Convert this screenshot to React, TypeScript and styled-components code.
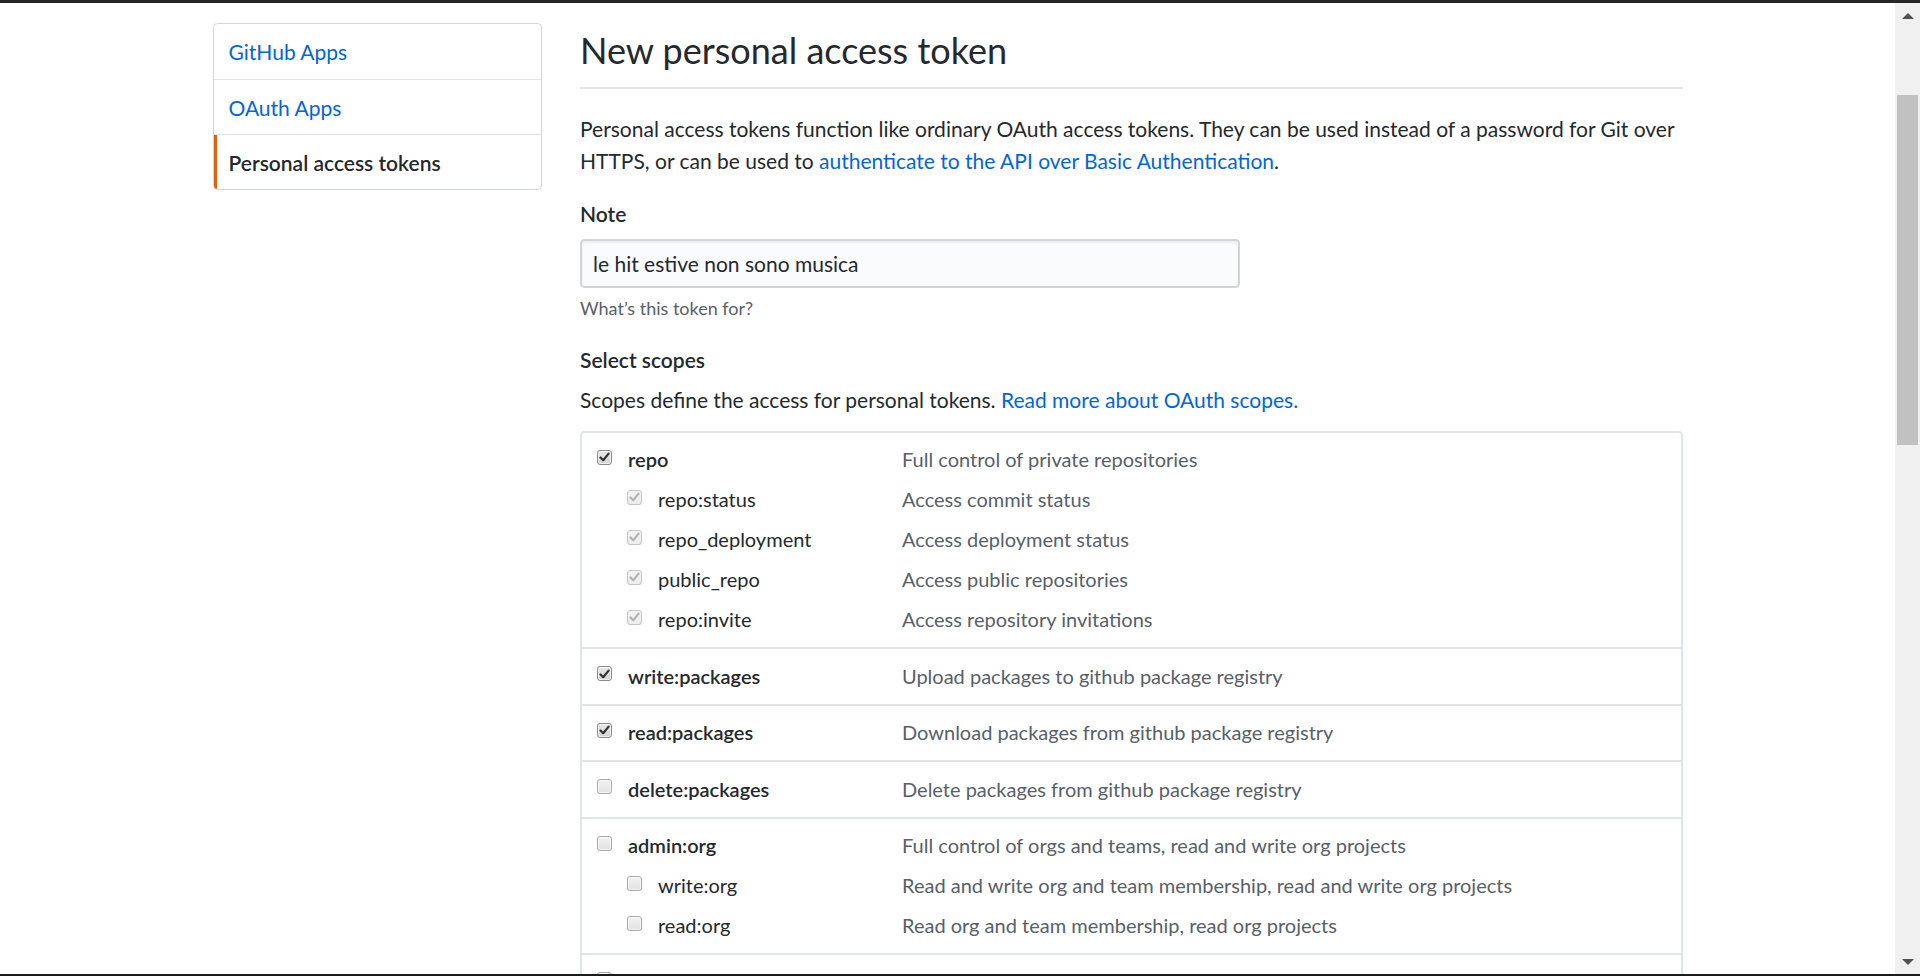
import React from "react";
import styled, { createGlobalStyle } from "styled-components";

const GlobalStyle = createGlobalStyle`
  html, body {
    margin: 0;
    padding: 0;
    background: #ffffff;
    overflow: hidden;
  }
  body {
    font-family: Lato, "Segoe UI", "Noto Sans", sans-serif;
    color: #24292e;
  }
  * { box-sizing: border-box; }
`;

const Screen = styled.div`
  display: flex;
  flex-direction: column;
  width: 1920px;
  height: 976px;
  overflow: hidden;
`;

const TopEdge = styled.div`
  height: 3px;
  flex: 0 0 3px;
  background: #262626;
`;

const BottomEdge = styled.div`
  height: 2px;
  flex: 0 0 2px;
  background: #1c1c1c;
`;

const Middle = styled.div`
  flex: 1;
  display: flex;
  min-height: 0;
`;

const Viewport = styled.div`
  flex: 1;
  overflow: hidden;
  background: #fff;
`;

const ScrollBar = styled.div`
  flex: 0 0 25px;
  width: 25px;
  background: #f0f0f0;
  display: flex;
  flex-direction: column;
`;

const ArrowButton = styled.div`
  flex: 0 0 25px;
  height: 25px;
  display: flex;
  align-items: center;
  justify-content: center;
`;

const Triangle = styled.span<{ $down?: boolean }>`
  width: 0;
  height: 0;
  border-left: 6px solid transparent;
  border-right: 6px solid transparent;
  ${(p) =>
    p.$down
      ? "border-top: 6px solid #505050;"
      : "border-bottom: 6px solid #505050;"}
`;

const Track = styled.div`
  flex: 1;
  padding: 0 2px;
`;

const Thumb = styled.div`
  margin-top: 67px;
  height: 350px;
  background: #c1c1c1;
`;

const Container = styled.div`
  max-width: 1518px;
  margin: 0 auto;
  padding: 20px 24px 0;
  display: flex;
  align-items: flex-start;
`;

const SideColumn = styled.nav`
  flex: 0 0 367.5px;
  padding-right: 38px;
`;

const Menu = styled.div`
  border: 1px solid #d1d5da;
  border-radius: 4.5px;
  background: #fff;
  overflow: hidden;
`;

const MenuItem = styled.a<{ $selected?: boolean }>`
  display: flex;
  align-items: center;
  height: 55px;
  padding: 0 15px;
  font-size: 21px;
  text-decoration: none;
  color: ${(p) => (p.$selected ? "#24292e" : "#0366d6")};
  font-weight: ${(p) => (p.$selected ? 600 : 400)};
  box-shadow: ${(p) => (p.$selected ? "inset 3px 0 0 #e36209" : "none")};
  & + & {
    border-top: 1px solid #e1e4e8;
  }
`;

const MainColumn = styled.main`
  flex: 1;
  min-width: 0;
`;

const Subhead = styled.div`
  padding-bottom: 10px;
  border-bottom: 2px solid #e1e4e8;
  margin-bottom: 24px;
`;

const Heading = styled.h2`
  margin: 0;
  font-size: 36px;
  line-height: 54px;
  font-weight: 400;
  color: #24292e;
`;

const Text = styled.p`
  margin: 0;
  font-size: 21px;
  line-height: 31.5px;
  color: #24292e;
`;

const Link = styled.a`
  color: #0366d6;
  text-decoration: none;
`;

const FormGroup = styled.dl`
  margin: 22px 0 0;
`;

const FieldLabel = styled.dt`
  font-size: 21px;
  line-height: 31.5px;
  font-weight: 600;
  margin: 0 0 9px;
`;

const FieldBody = styled.dd`
  margin: 0;
`;

const TextInput = styled.input`
  display: block;
  width: 660px;
  height: 49px;
  padding: 0 11px;
  font-family: inherit;
  font-size: 21px;
  color: #24292e;
  background: #fafbfc;
  border: 2px solid #d1d5da;
  border-radius: 4.5px;
  box-shadow: inset 0 1.5px 3px rgba(27, 31, 35, 0.075);
  outline: none;
`;

const Note = styled.p`
  margin: 6px 0 0;
  font-size: 18px;
  line-height: 29px;
  color: #586069;
`;

const SectionLabel = styled.h3`
  margin: 21px 0 9px;
  font-size: 21px;
  line-height: 31.5px;
  font-weight: 600;
`;

const ScopeBox = styled.div`
  margin-top: 15px;
  border: 2px solid #e1e4e8;
  border-radius: 4.5px;
`;

const ScopeGroup = styled.div`
  padding: 6.5px 0 8px 15px;
  & + & {
    border-top: 2px solid #e1e4e8;
  }
`;

const ScopeLine = styled.div`
  display: grid;
  grid-template-columns: 305px 1fr;
  align-items: center;
  height: 40px;
`;

const ScopeLabel = styled.label<{ $child?: boolean }>`
  display: flex;
  align-items: center;
  gap: 16px;
  padding-left: ${(p) => (p.$child ? "30px" : "0")};
  font-size: 20px;
  font-weight: ${(p) => (p.$child ? 400 : 600)};
  color: #24292e;
  white-space: nowrap;
`;

const ScopeDesc = styled.span`
  font-size: 20px;
  color: #586069;
  white-space: nowrap;
`;

const Box = styled.span<{ $checked?: boolean; $disabled?: boolean }>`
  flex: 0 0 15px;
  width: 15px;
  height: 15px;
  margin-bottom: 4px;
  border-radius: 3px;
  display: flex;
  align-items: center;
  justify-content: center;
  border: 1px solid
    ${(p) => (p.$disabled ? "#c6c6c6" : p.$checked ? "#8c8c8c" : "#a9a9a9")};
  background: ${(p) =>
    p.$disabled
      ? "linear-gradient(#f4f4f4, #ebebeb)"
      : p.$checked
      ? "linear-gradient(#e8e8e8, #d4d4d4)"
      : "linear-gradient(#f2f2f2, #e2e2e2)"};
  box-shadow: ${(p) => (p.$disabled ? "none" : "inset 0 0 0 1px rgba(255,255,255,0.6)")};
`;

function Checkbox({ checked, disabled }: { checked?: boolean; disabled?: boolean }) {
  return (
    <Box $checked={checked} $disabled={disabled}>
      {checked && (
        <svg width="11" height="10" viewBox="0 0 11 10">
          <path
            d="M1.5 5.5 L4.2 8.2 L9.6 1.6"
            fill="none"
            stroke={disabled ? "#b3b3b3" : "#333333"}
            strokeWidth="2.2"
            strokeLinecap="round"
            strokeLinejoin="round"
          />
        </svg>
      )}
    </Box>
  );
}

type Scope = {
  name: string;
  desc: string;
  checked?: boolean;
  children?: { name: string; desc: string; checked?: boolean; disabled?: boolean }[];
};

const scopes: Scope[] = [
  {
    name: "repo",
    desc: "Full control of private repositories",
    checked: true,
    children: [
      { name: "repo:status", desc: "Access commit status", checked: true, disabled: true },
      { name: "repo_deployment", desc: "Access deployment status", checked: true, disabled: true },
      { name: "public_repo", desc: "Access public repositories", checked: true, disabled: true },
      { name: "repo:invite", desc: "Access repository invitations", checked: true, disabled: true },
    ],
  },
  { name: "write:packages", desc: "Upload packages to github package registry", checked: true },
  { name: "read:packages", desc: "Download packages from github package registry", checked: true },
  { name: "delete:packages", desc: "Delete packages from github package registry" },
  {
    name: "admin:org",
    desc: "Full control of orgs and teams, read and write org projects",
    children: [
      { name: "write:org", desc: "Read and write org and team membership, read and write org projects" },
      { name: "read:org", desc: "Read org and team membership, read org projects" },
    ],
  },
  {
    name: "admin:public_key",
    desc: "Full control of user public keys",
    children: [
      { name: "write:public_key", desc: "Write user public keys" },
      { name: "read:public_key", desc: "Read user public keys" },
    ],
  },
];

export default function App() {
  return (
    <>
      <GlobalStyle />
      <Screen>
        <TopEdge />
        <Middle>
          <Viewport>
            <Container>
              <SideColumn>
                <Menu>
                  <MenuItem href="#">GitHub Apps</MenuItem>
                  <MenuItem href="#">OAuth Apps</MenuItem>
                  <MenuItem href="#" $selected>
                    Personal access tokens
                  </MenuItem>
                </Menu>
              </SideColumn>
              <MainColumn>
                <Subhead>
                  <Heading>New personal access token</Heading>
                </Subhead>
                <Text>
                  Personal access tokens function like ordinary OAuth access tokens. They can be used
                  instead of a password for Git over HTTPS, or can be used to{" "}
                  <Link href="#">authenticate to the API over Basic Authentication</Link>.
                </Text>
                <FormGroup>
                  <FieldLabel>Note</FieldLabel>
                  <FieldBody>
                    <TextInput defaultValue="le hit estive non sono musica" />
                    <Note>What’s this token for?</Note>
                  </FieldBody>
                </FormGroup>
                <SectionLabel>Select scopes</SectionLabel>
                <Text>
                  Scopes define the access for personal tokens.{" "}
                  <Link href="#">Read more about OAuth scopes.</Link>
                </Text>
                <ScopeBox>
                  {scopes.map((s) => (
                    <ScopeGroup key={s.name}>
                      <ScopeLine>
                        <ScopeLabel>
                          <Checkbox checked={s.checked} />
                          {s.name}
                        </ScopeLabel>
                        <ScopeDesc>{s.desc}</ScopeDesc>
                      </ScopeLine>
                      {s.children?.map((c) => (
                        <ScopeLine key={c.name}>
                          <ScopeLabel $child>
                            <Checkbox checked={c.checked} disabled={c.disabled} />
                            {c.name}
                          </ScopeLabel>
                          <ScopeDesc>{c.desc}</ScopeDesc>
                        </ScopeLine>
                      ))}
                    </ScopeGroup>
                  ))}
                </ScopeBox>
              </MainColumn>
            </Container>
          </Viewport>
          <ScrollBar>
            <ArrowButton>
              <Triangle />
            </ArrowButton>
            <Track>
              <Thumb />
            </Track>
            <ArrowButton>
              <Triangle $down />
            </ArrowButton>
          </ScrollBar>
        </Middle>
        <BottomEdge />
      </Screen>
    </>
  );
}
